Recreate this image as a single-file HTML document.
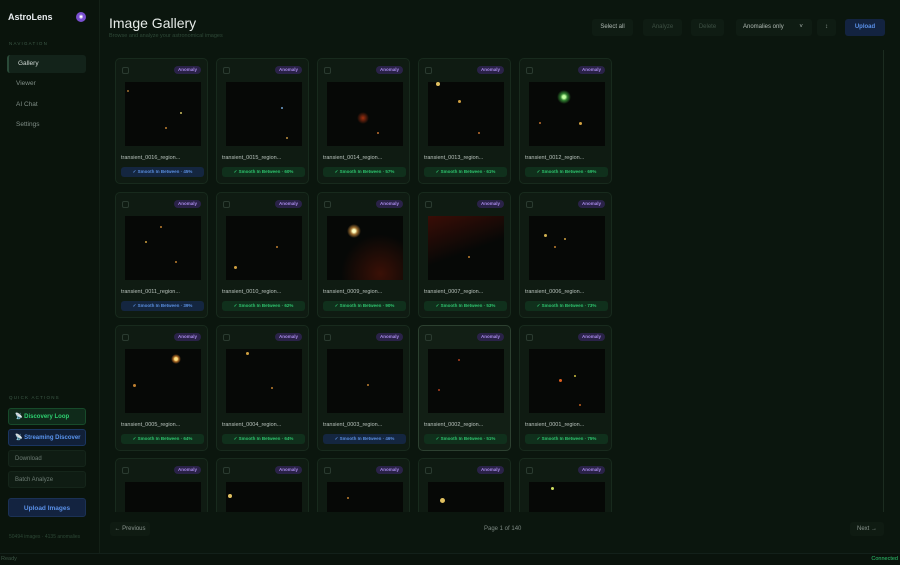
<!DOCTYPE html>
<html><head><meta charset="utf-8"><style>
*{box-sizing:border-box;margin:0;padding:0}
body{width:900px;height:565px;overflow:hidden;background:#0b160e;font-family:"Liberation Sans",sans-serif;color:#d8dde0;position:relative}
.side{position:absolute;left:0;top:0;width:100px;height:553px;background:#0a140c;border-right:1px solid #132016}
.logo{position:absolute;left:8px;top:12px;font-size:9px;font-weight:bold;color:#e8ecef}
.av{position:absolute;left:76px;top:12px;width:10px;height:10px;border-radius:50%;background:#7a4fd0;font-size:5px;color:#fff;text-align:center;line-height:10px}
.lab{position:absolute;left:9px;font-size:4.5px;letter-spacing:1.2px;color:#3d5a48}
.nav{position:absolute;left:7px;width:79px;height:18px;font-size:6.5px;color:#7f8d86;padding-left:9px;line-height:18px}
.nav.act{background:#13231a;border-left:2px solid #2a4a38;color:#d0d8d4;border-radius:3px}
.qa{position:absolute;left:8px;width:78px;height:17px;border-radius:3px;font-size:6px;line-height:17px;padding-left:6px;background:#0f1c13;border:1px solid #15251a;color:#6e7d75}
.title{position:absolute;left:109px;top:15px;font-size:14px;color:#e6ebe8}
.sub{position:absolute;left:109px;top:33px;font-size:5.5px;color:#2f4a38}
.tb{position:absolute;top:19px;height:17px;border-radius:3px;font-size:6px;line-height:17px;text-align:center;background:#0f1c13;color:#8e9a94}
.grid{position:absolute;left:108px;top:50px;width:776px;height:462px;overflow:hidden;border-right:1px solid #1c2c20}
.card{position:absolute;width:93px;height:126px;border-radius:5px;background:#0f1b12;border:1px solid #182a1d}
.card.h{border-color:#2c4030;background:#121f15}
.cb{position:absolute;left:6px;top:8px;width:7px;height:7px;border:1px solid #2b3b30;border-radius:2px}
.an{position:absolute;right:6px;top:7px;height:8px;padding:0 4px;border-radius:4px;background:#2a2248;color:#a88ae8;font-size:4.5px;line-height:8px;font-weight:bold}
.img{position:absolute;left:9px;top:23px;width:76px;height:64px;background:#060806;overflow:hidden}
.fn{position:absolute;left:5px;top:96px;font-size:5.5px;color:#b8c2bc}
.sc{position:absolute;left:5px;top:108px;width:83px;height:10px;border-radius:3px;font-size:4.5px;line-height:10px;text-align:center;font-weight:bold}
.g{background:#10301c;color:#2ec46e}.b{background:#142640;color:#5a8fe0}
.s{position:absolute;border-radius:50%}
.pg{position:absolute;top:522px;height:14px;font-size:6px;line-height:14px;color:#8a958f;border-radius:3px}
</style></head><body>
<div class="side">
<div class="logo">AstroLens</div><div class="av">◉</div>
<div class="lab" style="top:41px">NAVIGATION</div>
<div class="nav act" style="top:55px">Gallery</div>
<div class="nav" style="top:75px">Viewer</div>
<div class="nav" style="top:96px">AI Chat</div>
<div class="nav" style="top:116px">Settings</div>
<div class="lab" style="top:395px">QUICK ACTIONS</div>
<div class="qa" style="top:408px;background:#0f2a1a;border-color:#174a2a;color:#2ed070;font-weight:bold">📡 Discovery Loop</div>
<div class="qa" style="top:429px;background:#112038;border-color:#1a3560;color:#5a95f0;font-weight:bold;overflow:hidden;white-space:nowrap">📡 Streaming Discover</div>
<div class="qa" style="top:450px">Download</div>
<div class="qa" style="top:471px">Batch Analyze</div>
<div class="qa" style="top:498px;height:19px;line-height:19px;text-align:center;padding:0;background:#132340;border-color:#1b3155;color:#5a90e8;font-weight:bold;font-size:6.5px">Upload Images</div>
<div style="position:absolute;left:9px;top:534px;font-size:5px;color:#2d4836">50494 images · 4135 anomalies</div>
</div>
<div class="title">Image Gallery</div>
<div class="sub">Browse and analyze your astronomical images</div>
<div class="tb" style="left:592px;width:41px;color:#b0bab4">Select all</div>
<div class="tb" style="left:643px;width:39px;color:#3e5044">Analyze</div>
<div class="tb" style="left:691px;width:33px;color:#3e5044">Delete</div>
<div class="tb" style="left:736px;width:76px;text-align:left;padding-left:7px;color:#b0bab4">Anomalies only <span style="margin-left:14px">˅</span></div>
<div class="tb" style="left:817px;width:19px">↕</div>
<div class="tb" style="left:845px;width:40px;background:#132340;color:#5a90e8;font-weight:bold">Upload</div>
<div class="grid">
<!-- row1 -->
<div class="card" style="left:7px;top:8px"><div class="cb"></div><div class="an">Anomaly</div><div class="img"><i class="s" style="left:55px;top:30px;width:2px;height:2px;background:#d0c060"></i><i class="s" style="left:40px;top:45px;width:2px;height:2px;background:#c08030"></i><i class="s" style="left:2px;top:8px;width:2px;height:2px;background:#a07030"></i></div><div class="fn">transient_0016_region...</div><div class="sc b">✓ Smooth In Between · 45%</div></div>
<div class="card" style="left:108px;top:8px"><div class="cb"></div><div class="an">Anomaly</div><div class="img"><i class="s" style="left:55px;top:25px;width:2px;height:2px;background:#70a0d0"></i><i class="s" style="left:60px;top:55px;width:2px;height:2px;background:#c09040"></i></div><div class="fn">transient_0015_region...</div><div class="sc g">✓ Smooth In Between · 60%</div></div>
<div class="card" style="left:209px;top:8px"><div class="cb"></div><div class="an">Anomaly</div><div class="img"><i class="s" style="left:30px;top:30px;width:12px;height:12px;background:radial-gradient(#a03010,transparent 70%)"></i><i class="s" style="left:50px;top:50px;width:2px;height:2px;background:#c07030"></i></div><div class="fn">transient_0014_region...</div><div class="sc g">✓ Smooth In Between · 57%</div></div>
<div class="card" style="left:310px;top:8px"><div class="cb"></div><div class="an">Anomaly</div><div class="img"><i class="s" style="left:8px;top:0px;width:4px;height:4px;background:#e0c060"></i><i class="s" style="left:30px;top:18px;width:3px;height:3px;background:#d0a040"></i><i class="s" style="left:50px;top:50px;width:2px;height:2px;background:#c07030"></i></div><div class="fn">transient_0013_region...</div><div class="sc g">✓ Smooth In Between · 61%</div></div>
<div class="card" style="left:411px;top:8px"><div class="cb"></div><div class="an">Anomaly</div><div class="img"><i class="s" style="left:28px;top:8px;width:14px;height:14px;background:radial-gradient(#c0ffa0 15%,#308030 35%,transparent 70%)"></i><i class="s" style="left:50px;top:40px;width:3px;height:3px;background:#d0a040"></i><i class="s" style="left:10px;top:40px;width:2px;height:2px;background:#c07030"></i></div><div class="fn">transient_0012_region...</div><div class="sc g">✓ Smooth In Between · 69%</div></div>
<!-- row2 -->
<div class="card" style="left:7px;top:142px"><div class="cb"></div><div class="an">Anomaly</div><div class="img"><i class="s" style="left:20px;top:25px;width:2px;height:2px;background:#d0a040"></i><i class="s" style="left:50px;top:45px;width:2px;height:2px;background:#c08030"></i><i class="s" style="left:35px;top:10px;width:2px;height:2px;background:#c08030"></i></div><div class="fn">transient_0011_region...</div><div class="sc b">✓ Smooth In Between · 39%</div></div>
<div class="card" style="left:108px;top:142px"><div class="cb"></div><div class="an">Anomaly</div><div class="img"><i class="s" style="left:8px;top:50px;width:3px;height:3px;background:#d0a040"></i><i class="s" style="left:50px;top:30px;width:2px;height:2px;background:#c08030"></i></div><div class="fn">transient_0010_region...</div><div class="sc g">✓ Smooth In Between · 62%</div></div>
<div class="card" style="left:209px;top:142px"><div class="cb"></div><div class="an">Anomaly</div><div class="img" style="background:radial-gradient(circle at 70% 90%,#3a1006,#060806 50%)"><i class="s" style="left:20px;top:8px;width:14px;height:14px;background:radial-gradient(#ffffc0 15%,#a07030 35%,transparent 70%)"></i></div><div class="fn">transient_0009_region...</div><div class="sc g">✓ Smooth In Between · 90%</div></div>
<div class="card" style="left:310px;top:142px"><div class="cb"></div><div class="an">Anomaly</div><div class="img" style="background:linear-gradient(160deg,#3a0d06,#060806 55%)"><i class="s" style="left:40px;top:40px;width:2px;height:2px;background:#c08030"></i></div><div class="fn">transient_0007_region...</div><div class="sc g">✓ Smooth In Between · 53%</div></div>
<div class="card" style="left:411px;top:142px"><div class="cb"></div><div class="an">Anomaly</div><div class="img"><i class="s" style="left:15px;top:18px;width:3px;height:3px;background:#d0b050"></i><i class="s" style="left:35px;top:22px;width:2px;height:2px;background:#d0a040"></i><i class="s" style="left:25px;top:30px;width:2px;height:2px;background:#c08030"></i></div><div class="fn">transient_0006_region...</div><div class="sc g">✓ Smooth In Between · 73%</div></div>
<!-- row3 -->
<div class="card" style="left:7px;top:275px"><div class="cb"></div><div class="an">Anomaly</div><div class="img"><i class="s" style="left:46px;top:5px;width:10px;height:10px;background:radial-gradient(#ffe080 20%,#a06020 40%,transparent 70%)"></i><i class="s" style="left:8px;top:35px;width:3px;height:3px;background:#c08030"></i></div><div class="fn">transient_0005_region...</div><div class="sc g">✓ Smooth In Between · 64%</div></div>
<div class="card" style="left:108px;top:275px"><div class="cb"></div><div class="an">Anomaly</div><div class="img"><i class="s" style="left:20px;top:3px;width:3px;height:3px;background:#d0a040"></i><i class="s" style="left:45px;top:38px;width:2px;height:2px;background:#c08030"></i></div><div class="fn">transient_0004_region...</div><div class="sc g">✓ Smooth In Between · 64%</div></div>
<div class="card" style="left:209px;top:275px"><div class="cb"></div><div class="an">Anomaly</div><div class="img"><i class="s" style="left:40px;top:35px;width:2px;height:2px;background:#c08030"></i></div><div class="fn">transient_0003_region...</div><div class="sc b">✓ Smooth In Between · 46%</div></div>
<div class="card h" style="left:310px;top:275px"><div class="cb"></div><div class="an">Anomaly</div><div class="img"><i class="s" style="left:30px;top:10px;width:2px;height:2px;background:#b04020"></i><i class="s" style="left:10px;top:40px;width:2px;height:2px;background:#b04020"></i></div><div class="fn">transient_0002_region...</div><div class="sc g">✓ Smooth In Between · 51%</div></div>
<div class="card" style="left:411px;top:275px"><div class="cb"></div><div class="an">Anomaly</div><div class="img"><i class="s" style="left:30px;top:30px;width:3px;height:3px;background:#e06020"></i><i class="s" style="left:45px;top:26px;width:2px;height:2px;background:#d0c040"></i><i class="s" style="left:50px;top:55px;width:2px;height:2px;background:#c06020"></i></div><div class="fn">transient_0001_region...</div><div class="sc g">✓ Smooth In Between · 75%</div></div>
<!-- row4 -->
<div class="card" style="left:7px;top:408px"><div class="cb"></div><div class="an">Anomaly</div><div class="img"></div></div>
<div class="card" style="left:108px;top:408px"><div class="cb"></div><div class="an">Anomaly</div><div class="img"><i class="s" style="left:2px;top:12px;width:4px;height:4px;background:#e0c060"></i></div></div>
<div class="card" style="left:209px;top:408px"><div class="cb"></div><div class="an">Anomaly</div><div class="img"><i class="s" style="left:20px;top:15px;width:2px;height:2px;background:#c08030"></i></div></div>
<div class="card" style="left:310px;top:408px"><div class="cb"></div><div class="an">Anomaly</div><div class="img"><i class="s" style="left:12px;top:16px;width:5px;height:5px;background:#e0c060"></i></div></div>
<div class="card" style="left:411px;top:408px"><div class="cb"></div><div class="an">Anomaly</div><div class="img"><i class="s" style="left:22px;top:5px;width:3px;height:3px;background:#d0e060"></i></div></div>
</div>
<div class="pg" style="left:110px;width:40px;text-align:center;background:#0f1b12">← Previous</div>
<div class="pg" style="left:484px;color:#7d8983">Page 1 of 140</div>
<div class="pg" style="left:850px;width:34px;text-align:center;background:#0f1b12">Next →</div>
<div style="position:absolute;left:0;top:553px;width:900px;height:12px;background:#0a130c;border-top:1px solid #13201a"></div>
<div style="position:absolute;left:1px;top:556px;font-size:5.5px;color:#3a5444">Ready</div>
<div style="position:absolute;right:2px;top:556px;font-size:5.5px;color:#2ec46e">Connected</div>
</body></html>
